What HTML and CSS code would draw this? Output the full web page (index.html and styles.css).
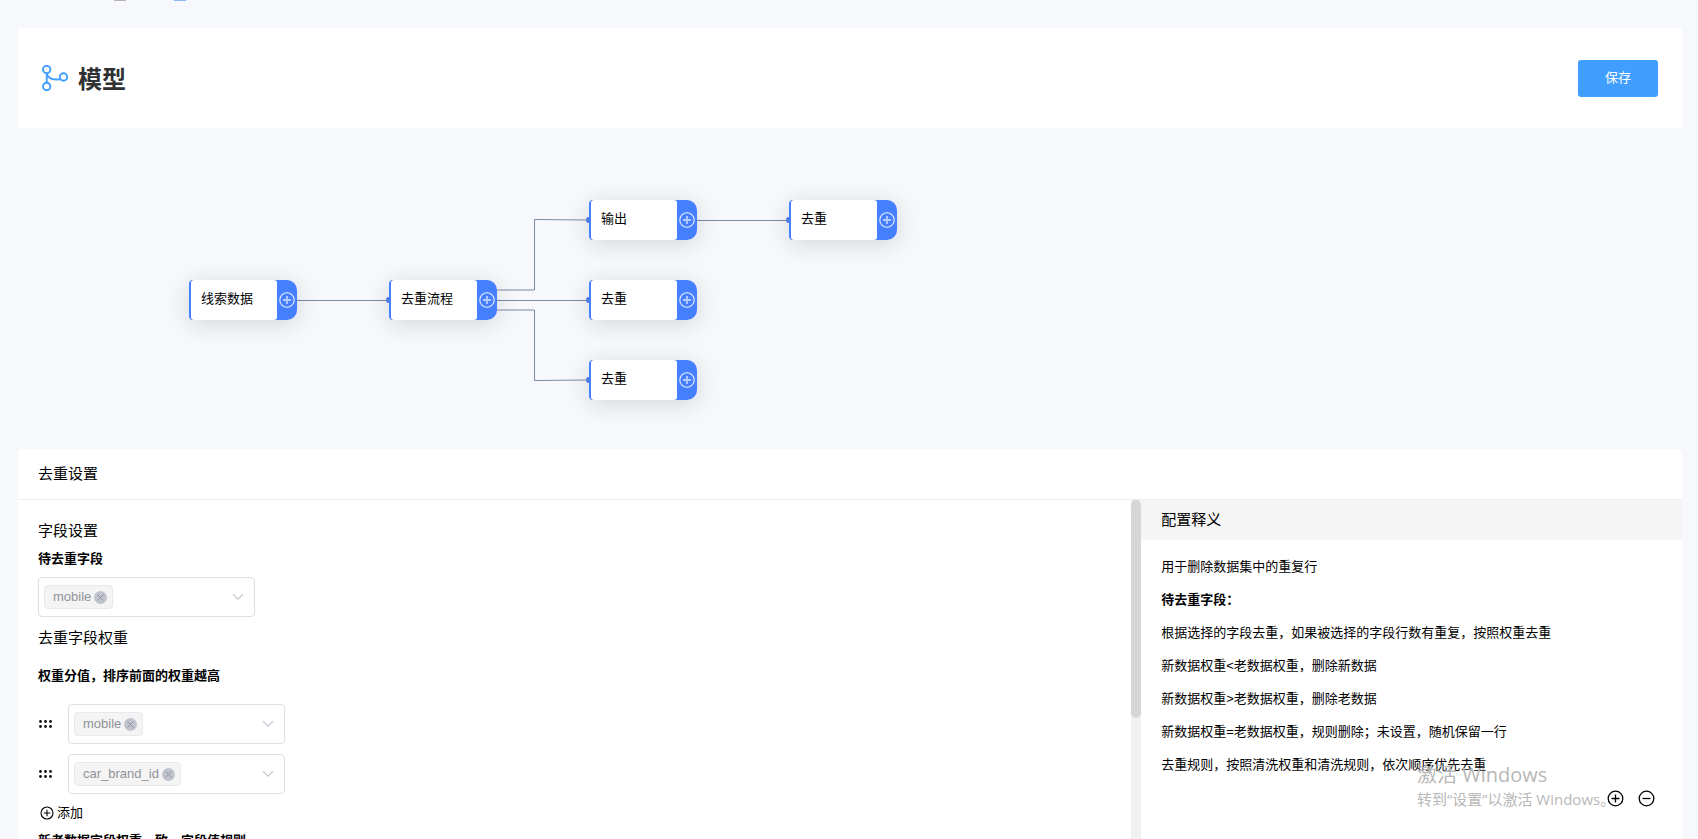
FILE: index.html
```html
<!DOCTYPE html>
<html lang="zh-CN">
<head>
<meta charset="utf-8">
<title>模型</title>
<link rel="stylesheet" href="styles.css">
</head>
<body>
<svg class="defs" aria-hidden="true">
  <symbol id="plus" viewBox="0 0 17 17"><circle cx="8.5" cy="8.5" r="7.3" fill="none" stroke="currentColor" stroke-width="1.3"/><path d="M8.5 4.5v8M4.5 8.5h8" stroke="currentColor" stroke-width="1.3"/></symbol>
  <symbol id="minus" viewBox="0 0 17 17"><circle cx="8.5" cy="8.5" r="7.3" fill="none" stroke="currentColor" stroke-width="1.3"/><path d="M4.5 8.5h8" stroke="currentColor" stroke-width="1.3"/></symbol>
  <symbol id="node-plus" viewBox="0 0 16 16"><circle cx="8" cy="8" r="7.2" fill="none" stroke="#fff" stroke-opacity=".85" stroke-width="1.1"/><path d="M8 4v8M4 8h8" stroke="#fff" stroke-opacity=".6" stroke-width="1.8"/></symbol>
  <symbol id="close" viewBox="0 0 13 13"><circle cx="6.5" cy="6.5" r="6.5" fill="#c0c4cc"/><path d="M3.5 3.5l6 6M9.5 3.5l-6 6" stroke="#909399" stroke-width="1"/></symbol>
  <symbol id="arrow" viewBox="0 0 12 8"><path d="M1 1.2l5 5 5-5" fill="none" stroke="#c0c4cc" stroke-width="1.2"/></symbol>
  <symbol id="grip" viewBox="0 0 14 10"><g fill="#111"><circle cx="2.5" cy="2.5" r="1.4"/><circle cx="7.5" cy="2.5" r="1.4"/><circle cx="12.5" cy="2.5" r="1.4"/><circle cx="2.5" cy="7.5" r="1.4"/><circle cx="7.5" cy="7.5" r="1.4"/><circle cx="12.5" cy="7.5" r="1.4"/></g></symbol>
</svg>
<div class="crumbs" aria-hidden="true"><span class="crumb"></span><span class="crumb crumb-active"></span></div>
<header class="header">
  <svg class="logo" viewBox="0 0 26 26" fill="none" stroke="#409eff" stroke-width="1.9"><circle cx="4.7" cy="4.5" r="3.7"/><circle cx="4.7" cy="21.5" r="3.7"/><circle cx="21.5" cy="12" r="3.7"/><path d="M4.7 8.2v9.6M4.7 8.5c1.2 4 5.3 7 13.3 5.7"/></svg>
  <h1 class="title">模型</h1>
  <button class="save" type="button">保存</button>
</header>
<main class="canvas">
  <svg class="links">
    <g transform="translate(-18 -128)">
      <g fill="#4680ff"><circle cx="389" cy="300" r="3"/><circle cx="589" cy="220" r="3"/><circle cx="589" cy="300" r="3"/><circle cx="589" cy="380" r="3"/><circle cx="789" cy="220" r="3"/></g>
      <path d="M297 300.5H389M497 300.5H589M697 220.5H789M497 290H534.5V219.5L589 220M497 310H534.5V380.5L589 380" fill="none" stroke="#7b8aa8"/>
    </g>
  </svg>
  <div class="node node-source"><span class="node-name">线索数据</span><button class="node-add" type="button" aria-label="添加节点"><svg><use href="#node-plus"/></svg></button></div>
  <div class="node node-flow"><span class="node-name">去重流程</span><button class="node-add" type="button" aria-label="添加节点"><svg><use href="#node-plus"/></svg></button></div>
  <div class="node node-output"><span class="node-name">输出</span><button class="node-add" type="button" aria-label="添加节点"><svg><use href="#node-plus"/></svg></button></div>
  <div class="node node-middle"><span class="node-name">去重</span><button class="node-add" type="button" aria-label="添加节点"><svg><use href="#node-plus"/></svg></button></div>
  <div class="node node-bottom"><span class="node-name">去重</span><button class="node-add" type="button" aria-label="添加节点"><svg><use href="#node-plus"/></svg></button></div>
  <div class="node node-last"><span class="node-name">去重</span><button class="node-add" type="button" aria-label="添加节点"><svg><use href="#node-plus"/></svg></button></div>
</main>
<section class="panel">
  <h2 class="panel-title">去重设置</h2>
  <div class="panel-body">
    <div class="settings">
      <h3 class="group">字段设置</h3>
      <label class="label" for="field">待去重字段</label>
      <div class="picker"><select class="select" id="field"><option></option></select><span class="tag">mobile<button class="tag-close" type="button" aria-label="移除"><svg><use href="#close"/></svg></button></span><svg class="arrow"><use href="#arrow"/></svg></div>
      <h3 class="group group-next">去重字段权重</h3>
      <p class="label label-weight" id="weight">权重分值，排序前面的权重越高</p>
      <div class="rows">
        <div class="row"><svg class="grip"><use href="#grip"/></svg><div class="picker"><select class="select" aria-labelledby="weight"><option></option></select><span class="tag">mobile<button class="tag-close" type="button" aria-label="移除"><svg><use href="#close"/></svg></button></span><svg class="arrow"><use href="#arrow"/></svg></div></div>
        <div class="row"><svg class="grip"><use href="#grip"/></svg><div class="picker"><select class="select" aria-labelledby="weight"><option></option></select><span class="tag">car_brand_id<button class="tag-close" type="button" aria-label="移除"><svg><use href="#close"/></svg></button></span><svg class="arrow"><use href="#arrow"/></svg></div></div>
      </div>
      <button class="add" type="button"><svg><use href="#plus"/></svg>添加</button>
      <p class="label">新老数据字段权重一致，字段值规则</p>
    </div>
    <div class="track"><div class="thumb"></div></div>
    <aside class="help">
      <h3 class="help-title">配置释义</h3>
      <div class="help-text">
        <p>用于删除数据集中的重复行</p>
        <p><strong>待去重字段：</strong></p>
        <p>根据选择的字段去重，如果被选择的字段行数有重复，按照权重去重</p>
        <p>新数据权重&lt;老数据权重，删除新数据</p>
        <p>新数据权重&gt;老数据权重，删除老数据</p>
        <p>新数据权重=老数据权重，规则删除；未设置，随机保留一行</p>
        <p>去重规则，按照清洗权重和清洗规则，依次顺序优先去重</p>
      </div>
    </aside>
  </div>
</section>
<div class="watermark"><p class="mark-title">激活 Windows</p><p class="mark-text">转到“设置”以激活 Windows。</p></div>
<div class="zoom"><button type="button" aria-label="放大"><svg><use href="#plus"/></svg></button><button type="button" aria-label="缩小"><svg><use href="#minus"/></svg></button></div>
</body>
</html>
```
FILE: styles.css
```css
* { box-sizing: border-box; }
body {
  margin: 0;
  padding: 0 16px 0 18px;
  height: 100vh;
  display: flex;
  flex-direction: column;
  overflow: hidden;
  background: #f6f8fc;
  color: #000;
  font: 13px/22px "Liberation Sans", "Noto Sans CJK SC", sans-serif;
}
h1, h2, h3, p { margin: 0; font-weight: 400; }
button { padding: 0; border: 0; background: none; color: inherit; font: inherit; cursor: pointer; }
svg { display: block; }
.defs { position: absolute; width: 0; height: 0; }

.crumbs { flex: none; height: 28px; display: flex; gap: 48px; padding-left: 96px; }
.crumb { width: 12px; height: 1px; background: #b9b2b0; }
.crumb-active { background: #8db8fb; }

.header {
  flex: none;
  display: flex;
  align-items: center;
  padding: 0 24px;
  height: 100px;
  background: #fff;
  border-radius: 4px;
}
.logo { width: 26px; height: 26px; }
.title { margin-left: 10px; padding-top: 4px; font-size: 24px; line-height: 32px; font-weight: 700; color: #303133; }
.save { margin-left: auto; width: 80px; height: 37px; border-radius: 3px; background: #409eff; color: #fff; }

.canvas { position: relative; flex: none; height: 321px; }
.links { width: 100%; height: 100%; }
.node {
  position: absolute;
  display: flex;
  width: 108px;
  height: 40px;
  padding-left: 2px;
  border-radius: 4px 10px 10px 4px;
  background: #4680ff;
  box-shadow: 0 4px 24px rgba(0, 0, 0, .14);
}
.node-name { flex: 1; padding-left: 10px; line-height: 38px; background: #fff; border-radius: 3px; }
.node-add { width: 20px; display: grid; place-items: center; }
.node-add svg { width: 16px; height: 16px; }
.node-source { left: 171px; top: 152px; }
.node-flow { left: 371px; top: 152px; }
.node-output { left: 571px; top: 72px; }
.node-middle { left: 571px; top: 152px; }
.node-bottom { left: 571px; top: 232px; }
.node-last { left: 771px; top: 72px; }

.panel { flex: 1; min-height: 0; display: flex; flex-direction: column; background: #fff; border-radius: 4px 4px 0 0; }
.panel-title { flex: none; padding: 0 20px; font-size: 15px; line-height: 50px; border-bottom: 1px solid #ededf0; }
.panel-body { flex: 1; min-height: 0; display: flex; }
.settings { flex: 1; min-width: 0; padding: 20px 20px 0; overflow: hidden; }
.group { font-size: 15px; line-height: 22px; }
.group-next { margin-top: 10px; }
.label { display: block; margin: 5px 0 6px; line-height: 24px; font-weight: 700; }
.label-weight { margin: 15px 0 16px; }
.picker { position: relative; width: 217px; height: 40px; }
.select { width: 100%; height: 100%; appearance: none; border: 1px solid #dcdfe6; border-radius: 4px; background: #fff; }
.tag {
  position: absolute;
  left: 6px;
  top: 8px;
  display: flex;
  align-items: center;
  gap: 3px;
  height: 24px;
  padding: 0 5px 0 8px;
  border: 1px solid #e9e9eb;
  border-radius: 4px;
  background: #f4f4f5;
  color: #909399;
}
.tag-close svg { width: 13px; height: 13px; }
.arrow { position: absolute; right: 11px; top: 16px; width: 12px; height: 8px; pointer-events: none; }
.rows { display: grid; gap: 10px; }
.row { display: flex; align-items: center; gap: 16px; }
.grip { width: 14px; height: 10px; }
.add { display: flex; align-items: center; gap: 3px; margin-top: 8px; padding-left: 2px; }
.add svg { width: 14px; height: 14px; }
.track { flex: none; width: 10px; background: #f1f1f1; }
.thumb { height: 218px; border-radius: 5px; background: #d6d6d6; }
.help { flex: none; width: 32.5%; }
.help-title { padding: 0 20px; font-size: 15px; line-height: 40px; background: #f5f5f5; }
.help-text { padding: 10px 20px; line-height: 33px; }

.watermark {
  position: absolute;
  right: 86px;
  bottom: 28px;
  width: 195px;
  color: #b8b8b8;
  font-family: "Open Sans", "Noto Sans CJK SC", sans-serif;
  white-space: nowrap;
  pointer-events: none;
}
.mark-title { font-size: 20px; line-height: 24px; }
.mark-text { font-size: 15px; line-height: 24px; }
.zoom { position: absolute; right: 43px; bottom: 32px; display: flex; gap: 14px; }
.zoom svg { width: 17px; height: 17px; }
```
